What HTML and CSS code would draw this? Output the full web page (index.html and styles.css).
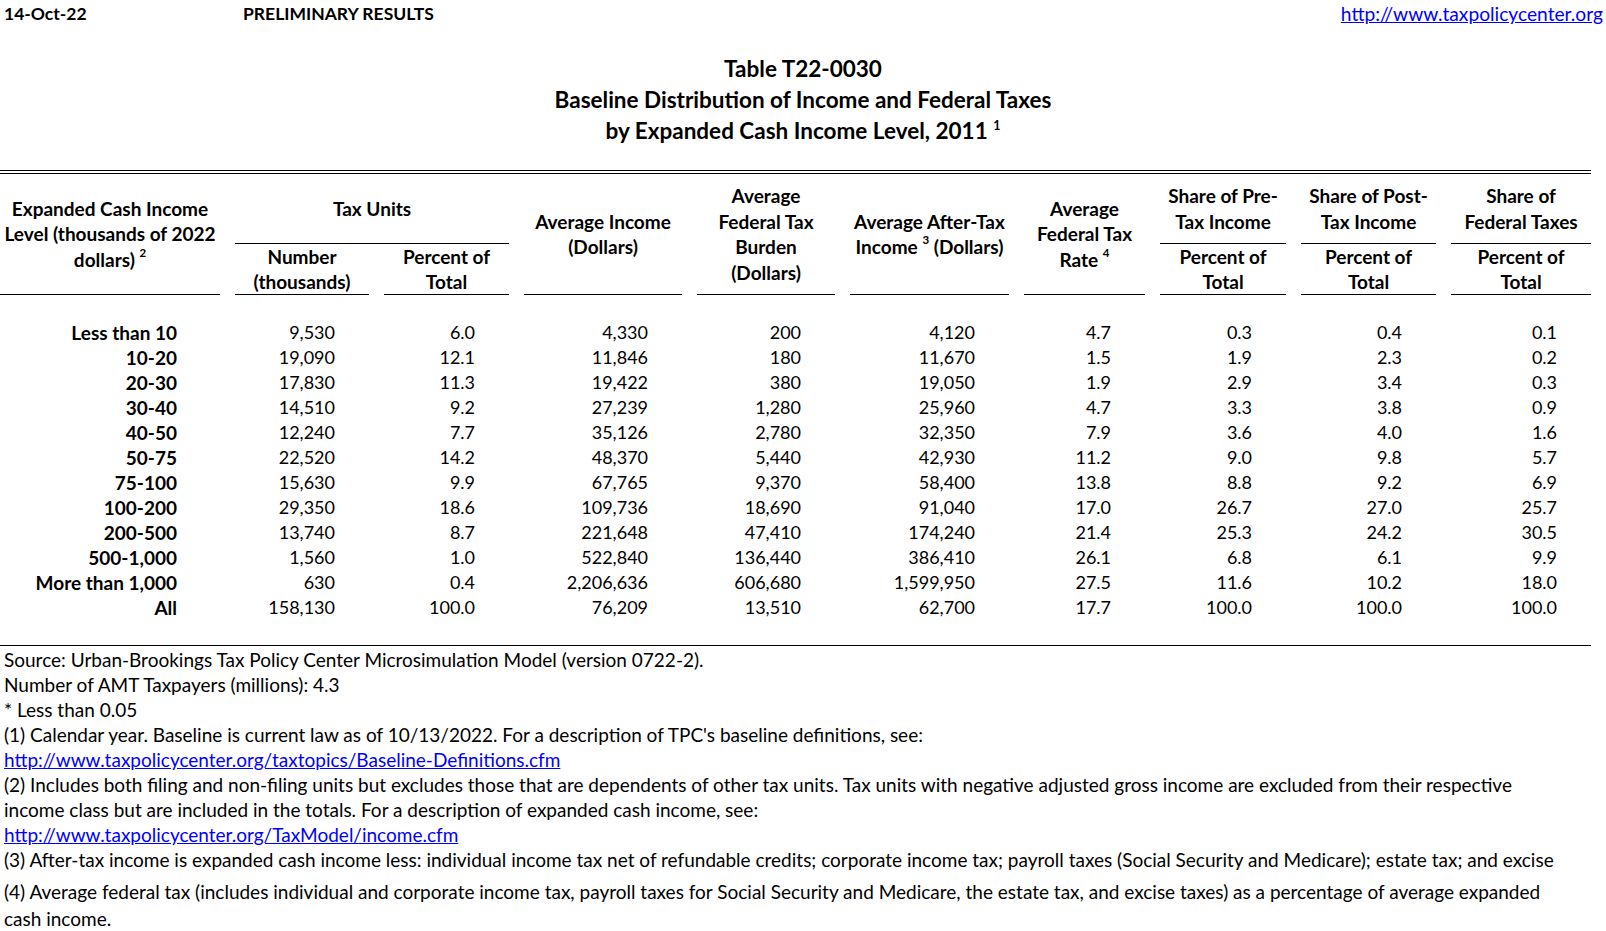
FILE: index.html
```html
<!DOCTYPE html>
<html lang="en">
<head>
<meta charset="utf-8">
<title>Table T22-0030</title>
<link rel="stylesheet" href="styles.css">
</head>
<body>
<header class="topbar">
  <span class="date">14-Oct-22</span>
  <span class="prelim">PRELIMINARY RESULTS</span>
  <a class="site link" href="#">http://www.taxpolicycenter.org</a>
</header>

<div class="title">
  <div>Table T22-0030</div>
  <div>Baseline Distribution of Income and Federal Taxes</div>
  <div>by Expanded Cash Income Level, 2011 <sup class="fn">1</sup></div>
</div>

<div class="rule-double"></div>

<table class="dist">
  <colgroup>
    <col class="c-label">
    <col class="c-num">
    <col class="c-pct">
    <col class="c-inc">
    <col class="c-bur">
    <col class="c-aft">
    <col class="c-rate">
    <col class="c-pre">
    <col class="c-post">
    <col class="c-fed">
  </colgroup>
  <thead>
    <tr class="h1">
      <th rowspan="2" class="ul">Expanded Cash Income<br>Level (thousands of 2022<br>dollars) <sup class="fn">2</sup></th>
      <th colspan="2" class="ul">Tax Units</th>
      <th rowspan="2" class="ul">Average Income<br>(Dollars)</th>
      <th rowspan="2" class="ul">Average<br>Federal Tax<br>Burden<br>(Dollars)</th>
      <th rowspan="2" class="ul">Average After-Tax<br>Income <sup class="fn">3</sup> (Dollars)</th>
      <th rowspan="2" class="ul">Average<br>Federal Tax<br>Rate <sup class="fn">4</sup></th>
      <th class="ul">Share of Pre-<br>Tax Income</th>
      <th class="ul">Share of Post-<br>Tax Income</th>
      <th class="ul">Share of<br>Federal Taxes</th>
    </tr>
    <tr class="h2">
      <th class="ul sub">Number<br>(thousands)</th>
      <th class="ul sub">Percent of<br>Total</th>
      <th class="ul sub">Percent of<br>Total</th>
      <th class="ul sub">Percent of<br>Total</th>
      <th class="ul sub">Percent of<br>Total</th>
    </tr>
  </thead>
  <tbody>
    <tr class="spacer"><td colspan="10"></td></tr>
    <tr><th>Less than 10</th><td>9,530</td><td>6.0</td><td>4,330</td><td>200</td><td>4,120</td><td>4.7</td><td>0.3</td><td>0.4</td><td>0.1</td></tr>
    <tr><th>10-20</th><td>19,090</td><td>12.1</td><td>11,846</td><td>180</td><td>11,670</td><td>1.5</td><td>1.9</td><td>2.3</td><td>0.2</td></tr>
    <tr><th>20-30</th><td>17,830</td><td>11.3</td><td>19,422</td><td>380</td><td>19,050</td><td>1.9</td><td>2.9</td><td>3.4</td><td>0.3</td></tr>
    <tr><th>30-40</th><td>14,510</td><td>9.2</td><td>27,239</td><td>1,280</td><td>25,960</td><td>4.7</td><td>3.3</td><td>3.8</td><td>0.9</td></tr>
    <tr><th>40-50</th><td>12,240</td><td>7.7</td><td>35,126</td><td>2,780</td><td>32,350</td><td>7.9</td><td>3.6</td><td>4.0</td><td>1.6</td></tr>
    <tr><th>50-75</th><td>22,520</td><td>14.2</td><td>48,370</td><td>5,440</td><td>42,930</td><td>11.2</td><td>9.0</td><td>9.8</td><td>5.7</td></tr>
    <tr><th>75-100</th><td>15,630</td><td>9.9</td><td>67,765</td><td>9,370</td><td>58,400</td><td>13.8</td><td>8.8</td><td>9.2</td><td>6.9</td></tr>
    <tr><th>100-200</th><td>29,350</td><td>18.6</td><td>109,736</td><td>18,690</td><td>91,040</td><td>17.0</td><td>26.7</td><td>27.0</td><td>25.7</td></tr>
    <tr><th>200-500</th><td>13,740</td><td>8.7</td><td>221,648</td><td>47,410</td><td>174,240</td><td>21.4</td><td>25.3</td><td>24.2</td><td>30.5</td></tr>
    <tr><th>500-1,000</th><td>1,560</td><td>1.0</td><td>522,840</td><td>136,440</td><td>386,410</td><td>26.1</td><td>6.8</td><td>6.1</td><td>9.9</td></tr>
    <tr><th>More than 1,000</th><td>630</td><td>0.4</td><td>2,206,636</td><td>606,680</td><td>1,599,950</td><td>27.5</td><td>11.6</td><td>10.2</td><td>18.0</td></tr>
    <tr><th>All</th><td>158,130</td><td>100.0</td><td>76,209</td><td>13,510</td><td>62,700</td><td>17.7</td><td>100.0</td><td>100.0</td><td>100.0</td></tr>
    <tr class="spacer"><td colspan="10"></td></tr>
  </tbody>
</table>

<footer class="notes">
  <p>Source: Urban-Brookings Tax Policy Center Microsimulation Model (version 0722-2).</p>
  <p>Number of AMT Taxpayers (millions): 4.3</p>
  <p>* Less than 0.05</p>
  <p>(1) Calendar year. Baseline is current law as of 10/13/2022. For a description of TPC's baseline definitions, see:</p>
  <p><a class="link" href="#">http://www.taxpolicycenter.org/taxtopics/Baseline-Definitions.cfm</a></p>
  <p>(2) Includes both filing and non-filing units but excludes those that are dependents of other tax units. Tax units with negative adjusted gross income are excluded from their respective<br>income class but are included in the totals. For a description of expanded cash income, see:</p>
  <p><a class="link" href="#">http://www.taxpolicycenter.org/TaxModel/income.cfm</a></p>
  <p>(3) After-tax income is expanded cash income less: individual income tax net of refundable credits; corporate income tax; payroll taxes (Social Security and Medicare); estate tax; and excise</p>
  <p class="note4">(4) Average federal tax (includes individual and corporate income tax, payroll taxes for Social Security and Medicare, the estate tax, and excise taxes) as a percentage of average expanded<br>cash income.</p>
</footer>
</body>
</html>
```

FILE: styles.css
```css
* { box-sizing: border-box; }

html, body {
  margin: 0;
  padding: 0;
  background: #fff;
}

body {
  width: 1606px;
  height: 931px;
  overflow: hidden;
  font-family: "Lato", "Liberation Sans", sans-serif;
  font-size: 17.5px;
  color: #000;
}

.link {
  color: #0000ff;
  text-decoration: underline;
}

.topbar {
  display: grid;
  grid-template-columns: 239px 1fr auto;
  height: 26px;
  line-height: 27px;
  padding: 0 3px 0 4px;
}

.date, .prelim {
  font-weight: 700;
}

.site {
  font-size: 19.2px;
}

.title {
  margin-top: 27px;
  text-align: center;
  font-weight: 700;
  font-size: 22.5px;
  line-height: 31px;
}

.fn {
  font-size: 11.5px;
  line-height: 0;
  vertical-align: 0.85em;
}

.title .fn {
  font-size: 12.5px;
  vertical-align: 0.7em;
}

.rule-double {
  width: 1591px;
  margin-top: 24px;
  border-top: 4px double #000;
}

.dist {
  border-collapse: separate;
  border-spacing: 15px 0;
  margin-left: -15px;
  table-layout: fixed;
  width: 1621px;
  font-size: 18px;
}

.c-label { width: 220px; }
.c-num { width: 134px; }
.c-pct { width: 125px; }
.c-inc { width: 158px; }
.c-bur { width: 138px; }
.c-aft { width: 159px; }
.c-rate { width: 121px; }
.c-pre { width: 126px; }
.c-post { width: 135px; }
.c-fed { width: 140px; }

.dist thead th {
  font-size: 19px;
  font-weight: 700;
  text-align: center;
  vertical-align: middle;
  line-height: 25.5px;
  padding: 0;
  white-space: nowrap;
}

.dist thead th.sub {
  vertical-align: bottom;
  line-height: 25px;
}

.dist th.ul {
  border-bottom: 1px solid #000;
}

.dist tr.h1 { height: 70px; }
.dist tr.h2 { height: 50px; }

.dist tbody tr {
  height: 25px;
}

.dist tbody th,
.dist tbody td {
  padding: 0 34px 0 0;
  line-height: 25px;
  text-align: right;
  white-space: nowrap;
}

.dist tbody th {
  font-size: 19px;
  font-weight: 700;
  padding-right: 43px;
}

.dist tbody tr.spacer td {
  padding: 0;
  height: 25px;
}

.notes {
  width: 1591px;
  border-top: 1px solid #000;
  padding-left: 4px;
  padding-top: 1px;
  font-size: 19px;
}

.notes p {
  margin: 0;
  line-height: 25px;
  white-space: nowrap;
}

.notes p.note4 {
  margin-top: 6px;
  line-height: 27px;
}
```
